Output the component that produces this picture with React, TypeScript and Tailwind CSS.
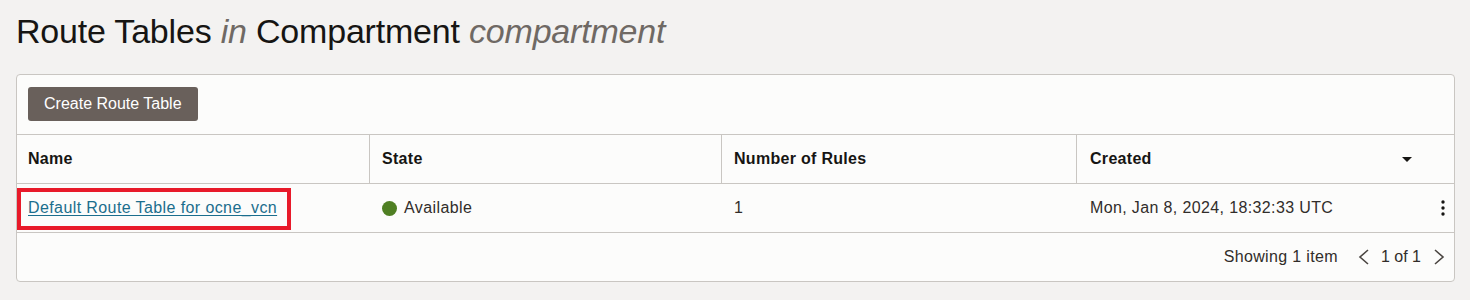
import React from 'react';

const cols = 'grid grid-cols-[353px_352px_355px_1fr]';

const Caret: React.FC = () => (
  <svg className="w-[10px] h-[5px]" viewBox="0 0 10 5" fill="#161513">
    <path d="M0 0h10L5 5z" />
  </svg>
);

const Kebab: React.FC = () => (
  <svg className="w-[4px] h-[16px]" viewBox="0 0 4 16" fill="#161513">
    <circle cx="2" cy="2" r="1.7" />
    <circle cx="2" cy="8" r="1.7" />
    <circle cx="2" cy="14" r="1.7" />
  </svg>
);

const Chevron: React.FC<{ dir: 'left' | 'right' }> = ({ dir }) => (
  <svg className="w-[12px] h-[16px]" viewBox="0 0 12 16" fill="none" stroke="#4a4541" strokeWidth={1.6}>
    {dir === 'left' ? <path d="M10 1L2 8l8 7" /> : <path d="M2 1l8 7-8 7" />}
  </svg>
);

export default function App() {
  return (
    <div className="min-h-[300px] bg-[#f3f2f1] px-[16px] pt-[11px] font-['Liberation_Sans',Arial,sans-serif] text-[#312d2a]">
      <h1 className="text-[34px] leading-[40px] text-[#161513] tracking-[-0.2px]">
        Route Tables <i className="text-[#6f6964]">in</i> Compartment{' '}
        <i className="text-[#6f6964]">compartment</i>
      </h1>

      <div className="mt-[23px] w-[1439px] rounded-[4px] border border-[#c9c6c2] bg-[#fcfcfb]">
        <div className="pt-[12px] px-[11px] pb-[13px] border-b border-[#c9c6c2]">
          <button className="h-[34px] px-[16px] rounded-[3px] bg-[#69605b] text-white text-[16px]">
            Create Route Table
          </button>
        </div>

        <div className={`${cols} h-[49px] border-b border-[#c9c6c2] text-[16px] font-bold text-[#161513] tracking-[0.3px]`}>
          <div className="flex items-center px-[11px] border-r border-[#c9c6c2]">Name</div>
          <div className="flex items-center px-[12px] border-r border-[#c9c6c2]">State</div>
          <div className="flex items-center px-[12px] border-r border-[#c9c6c2]">Number of Rules</div>
          <div className="flex items-center justify-between pl-[13px] pr-[42px]">
            Created
            <Caret />
          </div>
        </div>

        <div className={`${cols} h-[49px] border-b border-[#c9c6c2] text-[16px]`}>
          <div className="relative flex items-center px-[11px]">
            <a href="#" className="text-[#1b6e8d] underline underline-offset-[2px] tracking-[0.4px]">
              Default Route Table for ocne_vcn
            </a>
            <div className="absolute left-0 top-[4px] w-[274px] h-[42px] border-[4px] border-[#e81a2a]" />
          </div>
          <div className="flex items-center px-[12px] gap-[7px]">
            <span className="w-[15px] h-[15px] rounded-full bg-[#4f7f23]" />
            <span className="tracking-[0.4px]">Available</span>
          </div>
          <div className="flex items-center px-[12px]">1</div>
          <div className="flex items-center justify-between pl-[13px] pr-[9px]">
            <span className="tracking-[0.37px]">Mon, Jan 8, 2024, 18:32:33 UTC</span>
            <Kebab />
          </div>
        </div>

        <div className="h-[48px] flex items-center justify-end pr-[9px] text-[16px]">
          <span className="tracking-[0.35px]">Showing 1 item</span>
          <span className="ml-[20px]"><Chevron dir="left" /></span>
          <span className="ml-[11px]">1 of 1</span>
          <span className="ml-[12px]"><Chevron dir="right" /></span>
        </div>
      </div>
    </div>
  );
}
